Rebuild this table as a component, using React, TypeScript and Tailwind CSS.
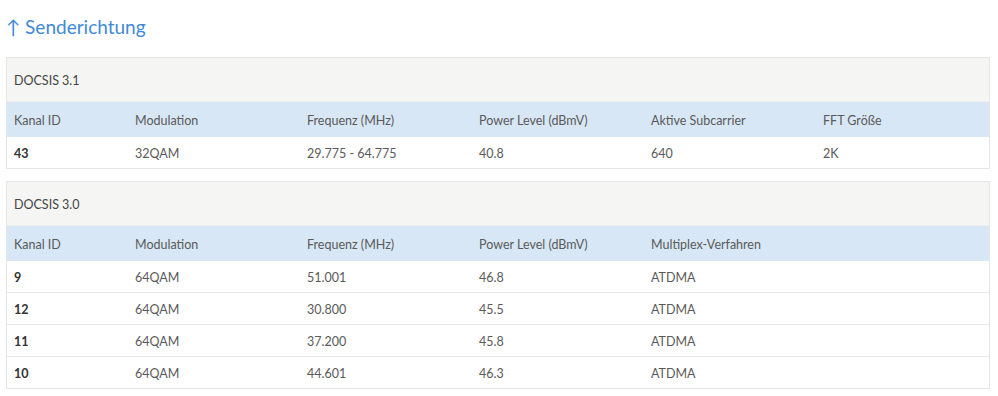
const docsis31 = {
  title: 'DOCSIS 3.1',
  cols: ['Kanal ID', 'Modulation', 'Frequenz (MHz)', 'Power Level (dBmV)', 'Aktive Subcarrier', 'FFT Größe'],
  rows: [['43', '32QAM', '29.775 - 64.775', '40.8', '640', '2K']],
}

const docsis30 = {
  title: 'DOCSIS 3.0',
  cols: ['Kanal ID', 'Modulation', 'Frequenz (MHz)', 'Power Level (dBmV)', 'Multiplex-Verfahren'],
  rows: [
    ['9', '64QAM', '51.001', '46.8', 'ATDMA'],
    ['12', '64QAM', '30.800', '45.5', 'ATDMA'],
    ['11', '64QAM', '37.200', '45.8', 'ATDMA'],
    ['10', '64QAM', '44.601', '46.3', 'ATDMA'],
  ],
}

function ChannelTable({ data }: { data: { title: string; cols: string[]; rows: string[][] } }) {
  const grid =
    data.cols.length === 6
      ? 'grid grid-cols-[121px_172px_172px_172px_172px_1fr]'
      : 'grid grid-cols-[121px_172px_172px_172px_1fr]'

  return (
    <div className="border border-[#e6e6e6] bg-white">
      <div className="h-[44px] flex items-center px-[7px] pt-[4px] bg-[#f5f5f3] border-b border-[#eeeeee] text-[12.5px] text-[#444]">
        {data.title}
      </div>
      <div className={`${grid} h-[35px] items-center pt-[3px] bg-[#d7e7f5] text-[12.5px] text-[#5a5a5a]`}>
        {data.cols.map((c) => (
          <div key={c} className="px-[7px]">{c}</div>
        ))}
      </div>
      {data.rows.map((r, i) => (
        <div
          key={i}
          className={`${grid} items-center pt-[3px] text-[12.5px] text-[#5a5a5a] ${i > 0 ? 'h-[32px] border-t border-[#e8e8e8]' : 'h-[31px]'}`}
        >
          {r.map((v, j) => (
            <div key={j} className={`px-[7px] ${j === 0 ? 'font-bold text-[#333]' : ''}`}>{v}</div>
          ))}
        </div>
      ))}
    </div>
  )
}

export default function App() {
  return (
    <div className="bg-white w-[998px] h-[396px] pl-[6px] pr-[8px] pt-[14px] font-['Lato',sans-serif]">
      <h2 className="text-[19px] leading-[26px] text-[#3f8ad8] h-[43px]">↑ Senderichtung</h2>
      <div className="flex flex-col gap-[12px]">
        <ChannelTable data={docsis31} />
        <ChannelTable data={docsis30} />
      </div>
    </div>
  )
}
